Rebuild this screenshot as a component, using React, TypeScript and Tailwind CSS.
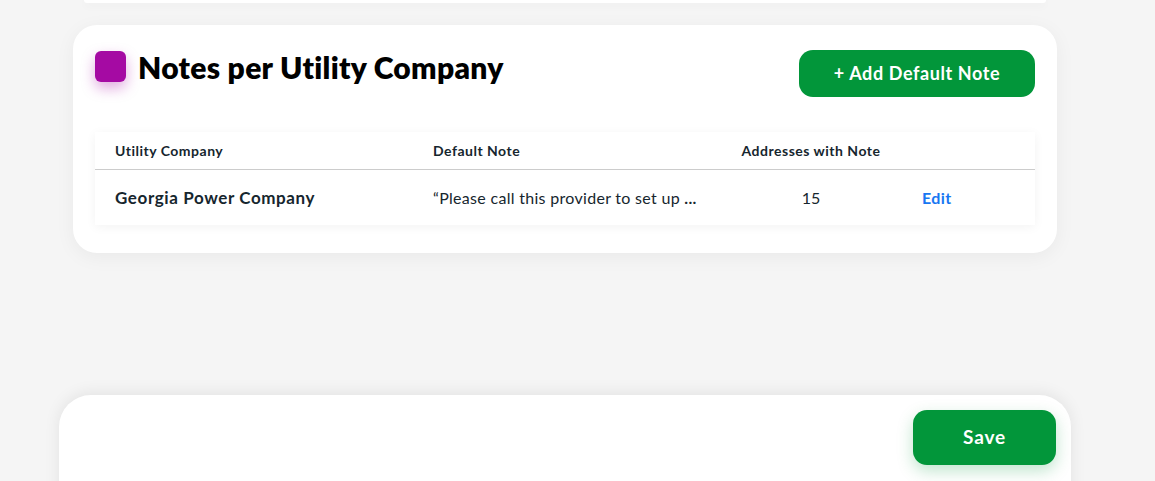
import React from "react";

export default function App() {
  const font = { fontFamily: "Lato, 'Noto Sans', sans-serif" };
  return (
    <div className="w-[1155px] h-[481px] overflow-hidden bg-[#f5f5f5] relative" style={font}>
      <div className="flex flex-col">
        {/* top card remnant */}
        <div className="ml-[84px] w-[962px] h-[3px] bg-white rounded-b-[24px] shadow-[0_2px_10px_rgba(0,0,0,0.06)]" />
        {/* main card */}
        <div className="ml-[73px] w-[984px] mt-[22px] bg-white rounded-[24px] shadow-[0_4px_20px_rgba(0,0,0,0.05)] px-[22px] pt-[25px] pb-[28px]">
          <div className="flex items-start justify-between">
            <div className="flex items-center gap-[12px] pt-[1px]">
              <div className="w-[31px] h-[31px] rounded-[6px] bg-[#a50aa3] shadow-[0_6px_14px_rgba(165,10,163,0.35)]" />
              <h2 className="text-[30px] font-extrabold text-black tracking-[0.3px] leading-none">Notes per Utility Company</h2>
            </div>
            <button className="w-[236px] h-[47px] rounded-[14px] bg-[#02963a] text-white font-bold text-[18px] tracking-[0.6px]">+ Add Default Note</button>
          </div>
          <div className="mt-[35px] bg-white shadow-[0_2px_10px_rgba(0,0,0,0.05)]">
            <div className="grid grid-cols-[318px_307px_182px_133px] h-[38px] items-center border-b border-[#cccccc] text-[14px] font-bold text-[#16262e] tracking-[0.5px]">
              <div className="pl-[20px]">Utility Company</div>
              <div className="pl-[20px]">Default Note</div>
              <div className="text-center">Addresses with Note</div>
              <div />
            </div>
            <div className="grid grid-cols-[318px_307px_182px_133px] h-[55px] items-center text-[16px] text-[#16262e]">
              <div className="pl-[20px] font-bold text-[17px] tracking-[0.6px]">Georgia Power Company</div>
              <div className="pl-[20px] whitespace-nowrap tracking-[0.3px]">“Please call this provider to set up <span className="font-bold">...</span></div>
              <div className="text-center">15</div>
              <div className="pl-[20px] font-bold text-[#1877f2] tracking-[0.4px]">Edit</div>
            </div>
          </div>
        </div>
        {/* bottom card */}
        <div className="ml-[59px] w-[1012px] mt-[142px] h-[120px] bg-white rounded-t-[32px] shadow-[0_-2px_16px_rgba(0,0,0,0.08)] flex justify-end pr-[15px] pt-[15px]">
          <button className="w-[143px] h-[55px] rounded-[14px] bg-[#02963a] text-white font-bold text-[19px] tracking-[0.8px] shadow-[0_6px_16px_rgba(2,150,58,0.25)]">Save</button>
        </div>
      </div>
    </div>
  );
}
